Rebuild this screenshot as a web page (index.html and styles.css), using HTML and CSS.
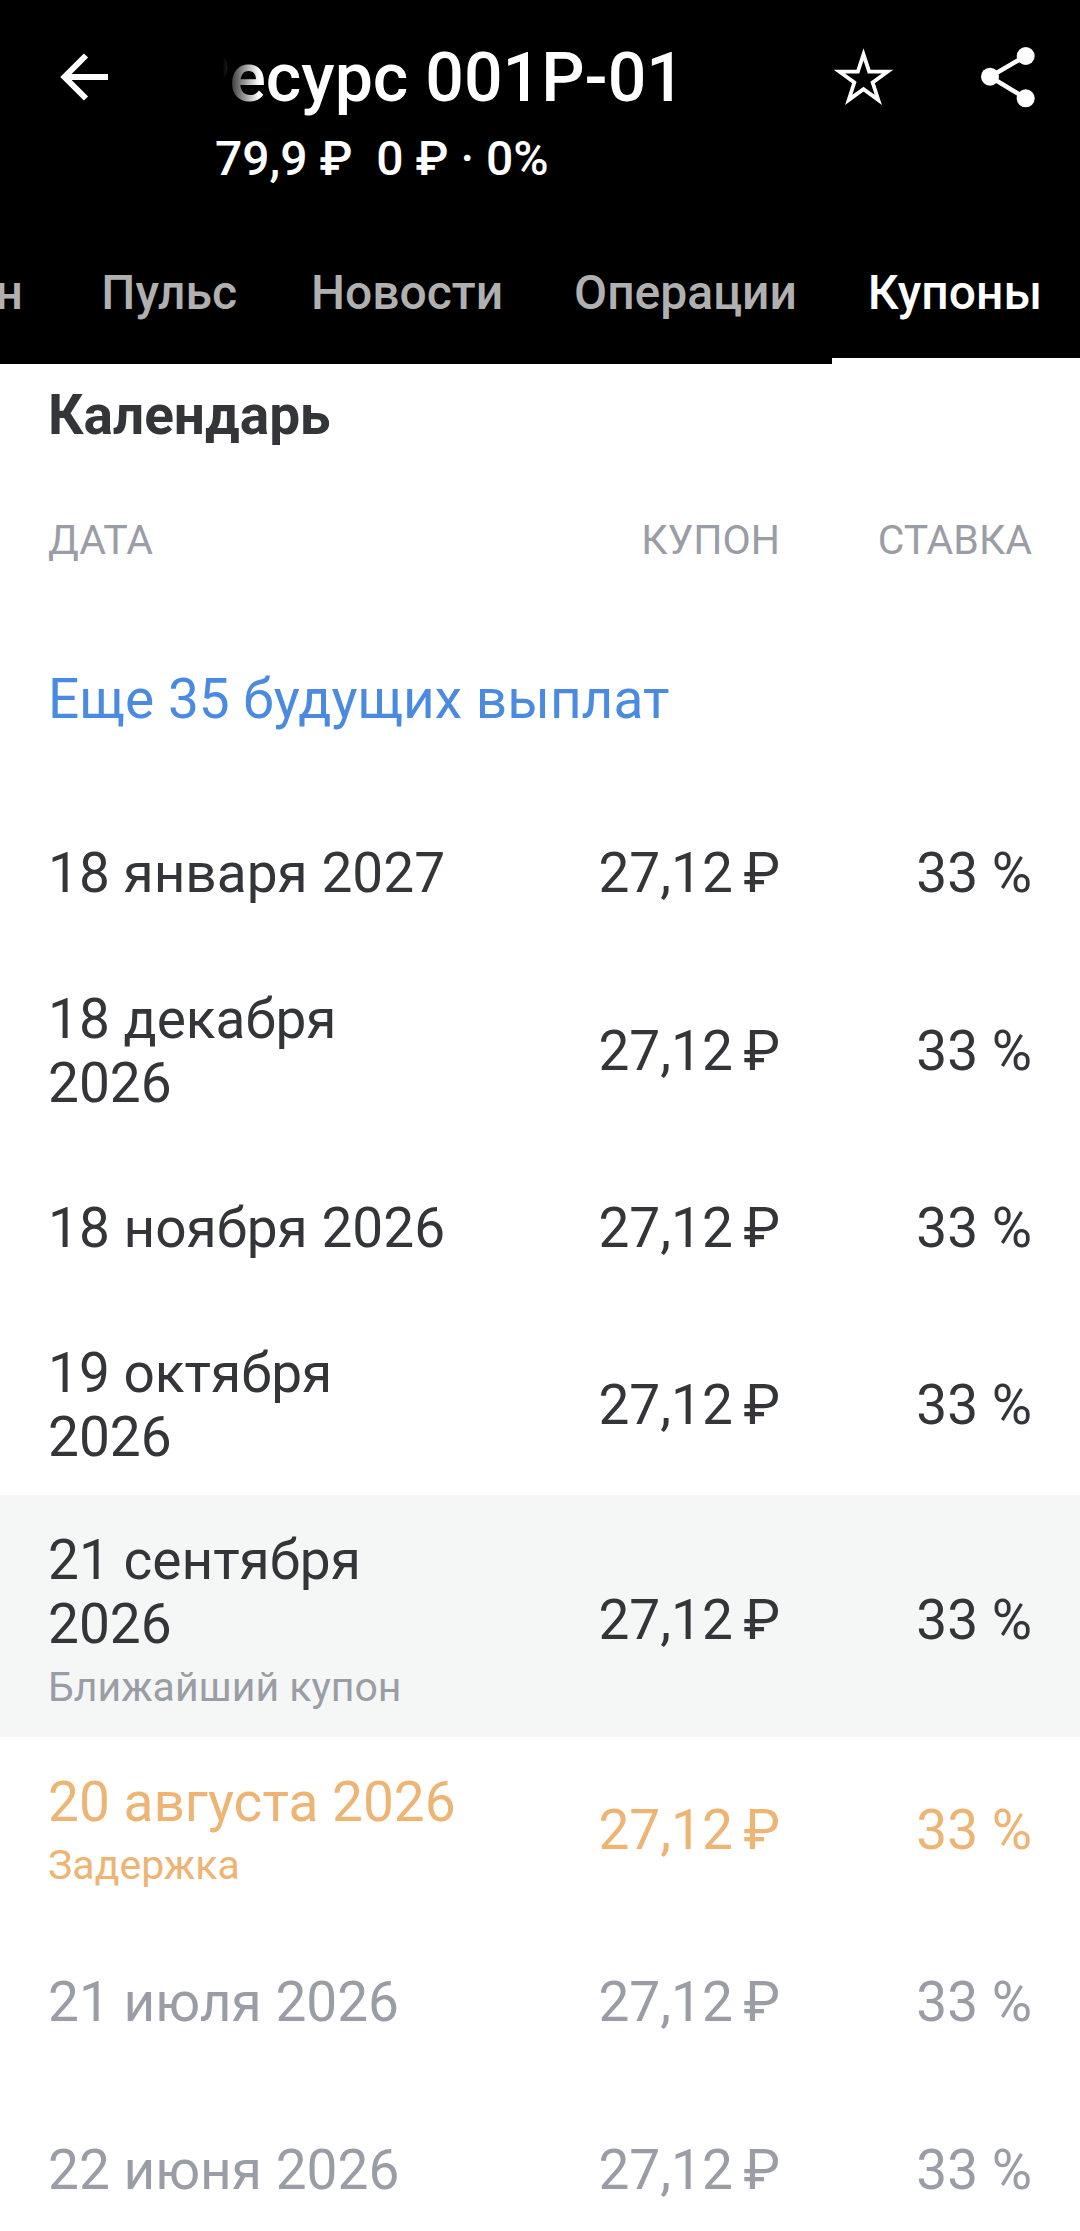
FILE: index.html
```html
<!DOCTYPE html>
<html lang="ru">
<head>
    <meta charset="UTF-8">
    <meta name="viewport" content="width=device-width, initial-scale=1.0">
    <title>Купоны</title>
    <link rel="stylesheet" href="styles.css">
</head>
<body>

<div class="header">
    <div class="topbar">
        <svg class="icon-back" viewBox="0 0 50 50">
            <path d="M27 3.500 L5.500 25 L27 46.500 M5.500 25 H49" fill="none" stroke="#fff" stroke-width="6"/>
        </svg>
        <div class="titles">
            <div class="title-clip"><span class="title">Ресурс 001Р-01</span></div>
            <div class="subtitle">79,9 ₽&nbsp; 0 ₽ · 0%</div>
        </div>
        <svg class="icon-star" viewBox="0 0 60 60">
            <path d="M29.500 7.300 L35.160 24.700 H53.500 L38.660 35.480 L44.300 52.900 L29.500 42.130 L14.700 52.900 L20.340 35.480 L5.500 24.700 H23.840 Z" fill="none" stroke="#fff" stroke-width="3.800"/>
        </svg>
        <svg class="icon-share" viewBox="0 0 56 62">
            <path d="M45.700 10 L10 30.700 L45.700 52.300" fill="none" stroke="#fff" stroke-width="4.500"/>
            <circle cx="45.700" cy="10" r="9" fill="#fff"/>
            <circle cx="10" cy="30.700" r="9" fill="#fff"/>
            <circle cx="45.700" cy="52.300" r="9" fill="#fff"/>
        </svg>
    </div>
    <div class="tabs">
        <div class="tab tab-first">Стакан</div>
        <div class="tab tab-pulse">Пульс</div>
        <div class="tab">Новости</div>
        <div class="tab">Операции</div>
        <div class="tab active">Купоны</div>
    </div>
</div>

<div class="section-title">Календарь</div>

<div class="row row-head">
    <div class="col-date">ДАТА</div>
    <div class="col-amount">КУПОН</div>
    <div class="col-rate">СТАВКА</div>
</div>

<div class="more">Еще 35 будущих выплат</div>

<div class="row row-jan">
    <div class="col-date">18 января 2027</div>
    <div class="col-amount">27,12 ₽</div>
    <div class="col-rate">33 %</div>
</div>
<div class="row row-two">
    <div class="col-date">18 декабря 2026</div>
    <div class="col-amount">27,12 ₽</div>
    <div class="col-rate">33 %</div>
</div>
<div class="row row-one">
    <div class="col-date">18 ноября 2026</div>
    <div class="col-amount">27,12 ₽</div>
    <div class="col-rate">33 %</div>
</div>
<div class="row row-two">
    <div class="col-date">19 октября 2026</div>
    <div class="col-amount">27,12 ₽</div>
    <div class="col-rate">33 %</div>
</div>
<div class="row row-next">
    <div class="col-date">
        21 сентября 2026
        <div class="note">Ближайший купон</div>
    </div>
    <div class="col-amount">27,12 ₽</div>
    <div class="col-rate">33 %</div>
</div>
<div class="row row-late">
    <div class="col-date">
        20 августа 2026
        <div class="note">Задержка</div>
    </div>
    <div class="col-amount">27,12 ₽</div>
    <div class="col-rate">33 %</div>
</div>
<div class="row row-past">
    <div class="col-date">21 июля 2026</div>
    <div class="col-amount">27,12 ₽</div>
    <div class="col-rate">33 %</div>
</div>
<div class="row row-past">
    <div class="col-date">22 июня 2026</div>
    <div class="col-amount">27,12 ₽</div>
    <div class="col-rate">33 %</div>
</div>

</body>
</html>
```

FILE: styles.css
```css
/* Page */
html, body {
    height: 2231px;
    overflow: hidden;
}
body {
    margin: 0;
    background: #fff;
    color: #333538;
    font-family: Roboto, "Noto Sans", sans-serif;
}

/* Black header */
.header {
    height: 364px;
    background: #000;
    color: #fff;
    overflow: hidden;
}
.topbar {
    display: flex;
    align-items: flex-start;
    height: 235px;
}
.icon-back {
    width: 50px;
    height: 50px;
    margin: 52px 0 0 59px;
}
.titles {
    width: 470px;
    margin: 38px 0 0 106px;
}
.title-clip {
    display: flex;
    justify-content: flex-end;
    overflow: hidden;
    white-space: nowrap;
    -webkit-mask-image: linear-gradient(to right, transparent 8px, #000 44px);
    mask-image: linear-gradient(to right, transparent 8px, #000 44px);
}
.title {
    font-size: 68px;
    line-height: 80px;
    font-weight: 500;
}
.subtitle {
    margin-top: 15px;
    font-size: 48px;
    line-height: 52px;
    font-weight: 500;
}
.icon-star {
    width: 60px;
    height: 60px;
    margin: 47px 0 0 149px;
}
.icon-share {
    width: 56px;
    height: 62px;
    margin: 46px 0 0 86px;
}

/* Tabs */
.tabs {
    display: flex;
    justify-content: flex-end;
    height: 129px;
}
.tab {
    flex: none;
    padding: 30px 35.500px 0;
    font-size: 48px;
    line-height: 56px;
    font-weight: 500;
    color: #b0b0b0;
}
.tab-pulse {
    padding-right: 38.500px;
}
.tab-first {
    padding-right: 43px;
}
.tab.active {
    padding-right: 38px;
    color: #fff;
    border-bottom: 6px solid #fff;
}

/* Calendar */
.section-title {
    padding: 0 48px;
    margin-top: 21px;
    font-size: 55px;
    line-height: 60px;
    font-weight: 700;
}
.row {
    display: flex;
    align-items: center;
    box-sizing: border-box;
    padding: 0 48px;
    font-size: 55px;
    line-height: 64px;
}
.col-date {
    width: 415px;
}
.col-amount {
    width: 317px;
    text-align: right;
    word-spacing: -3px;
}
.col-rate {
    flex: 1;
    text-align: right;
}
.row-head {
    height: 64px;
    margin-top: 63px;
    font-size: 41px;
    color: #9a9da6;
}
.more {
    padding: 0 48px;
    margin-top: 95px;
    font-size: 55px;
    line-height: 64px;
    color: #4a8ae0;
}
.row-jan {
    height: 177px;
    margin-top: 53px;
}
.row-two {
    height: 180px;
}
.row-one {
    height: 174px;
}
.row-next {
    height: 242px;
    padding-top: 8px;
    background: #f5f7f6;
}
.row-late {
    height: 177px;
    margin-top: 4px;
    color: #edb474;
}
.row-next .col-date, .row-late .col-date {
    padding-top: 6px;
}
.row-past {
    height: 168px;
    color: #9a9da6;
}
.note {
    font-size: 41px;
    line-height: 62px;
    color: #9a9da6;
}
.row-late .note {
    color: #edb474;
}
```
